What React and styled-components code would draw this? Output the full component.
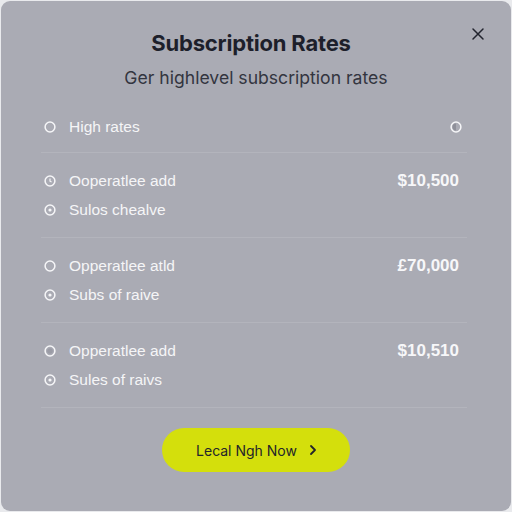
import React from 'react';
import styled, { createGlobalStyle } from 'styled-components';

const sections = [
  {
    rows: [{ label: 'High rates', icon: 'ring' }],
    aside: 'dot',
  },
  {
    rows: [
      { label: 'Ooperatlee add', icon: 'clock', price: '$10,500' },
      { label: 'Sulos chealve', icon: 'target' },
    ],
  },
  {
    rows: [
      { label: 'Opperatlee atld', icon: 'ring', price: '£70,000' },
      { label: 'Subs of raive', icon: 'target' },
    ],
  },
  {
    rows: [
      { label: 'Opperatlee add', icon: 'filled', price: '$10,510' },
      { label: 'Sules of raivs', icon: 'target' },
    ],
  },
];

const GlobalStyle = createGlobalStyle`
  html, body {
    margin: 0;
    padding: 0;
    background: #e9eaed;
  }
  body {
    font-family: Inter, "Liberation Sans", sans-serif;
  }
`;

const RowIcon = ({ kind }) => (
  <svg width="12" height="12" viewBox="0 0 12 12">
    <circle cx="6" cy="6" r="4.9" fill="none" stroke="#f6f6f8" strokeWidth="1.5" />
    {kind === 'target' && <circle cx="6" cy="6" r="1.6" fill="#f6f6f8" />}
    {kind === 'clock' && <path d="M6 3.4 V6.2 L7.6 7" fill="none" stroke="#f6f6f8" strokeWidth="1.2" />}
    {kind === 'filled' && <circle cx="6" cy="6" r="2.8" fill="#9a9ba5" />}
  </svg>
);

const AsideIcon = () => (
  <svg width="12" height="12" viewBox="0 0 12 12">
    <circle cx="6" cy="6" r="4.9" fill="none" stroke="#f6f6f8" strokeWidth="1.5" />
    <path d="M6 2.6 A3.4 3.4 0 0 0 6 9.4 Z" fill="#8f909a" />
  </svg>
);

export default function App() {
  return (
    <>
      <GlobalStyle />
      <Page>
        <Card>
          <Close aria-label="close">
            <svg width="14" height="14" viewBox="0 0 14 14">
              <path d="M2 2 L12 12 M12 2 L2 12" stroke="#22242e" strokeWidth="1.5" strokeLinecap="round" />
            </svg>
          </Close>
          <Title>Subscription Rates</Title>
          <Subtitle>Ger highlevel subscription rates</Subtitle>
          <List>
            {sections.map((section, i) => (
              <Section key={i} first={i === 0}>
                {section.rows.map((row, j) => (
                  <Row key={j}>
                    <RowIcon kind={row.icon} />
                    <Label>{row.label}</Label>
                    {row.price && <Price>{row.price}</Price>}
                    {j === 0 && section.aside === 'dot' && (
                      <AsideSlot>
                        <AsideIcon />
                      </AsideSlot>
                    )}
                  </Row>
                ))}
              </Section>
            ))}
          </List>
          <Footer>
            <CtaButton>
              Lecal Ngh Now
              <svg width="10" height="12" viewBox="0 0 10 12">
                <path d="M3 2 L7 6 L3 10" fill="none" stroke="#22242a" strokeWidth="1.8" strokeLinecap="round" strokeLinejoin="round" />
              </svg>
            </CtaButton>
          </Footer>
        </Card>
      </Page>
    </>
  );
}

const Page = styled.div`
  width: 512px;
  height: 512px;
  padding: 1px;
  box-sizing: border-box;
`;

const Card = styled.div`
  position: relative;
  height: 100%;
  box-sizing: border-box;
  background: #aaabb4;
  border-radius: 9px;
  padding: 28px 0 0;
  display: flex;
  flex-direction: column;
`;

const Close = styled.button`
  position: absolute;
  top: 25px;
  right: 25px;
  width: 16px;
  height: 16px;
  padding: 0;
  border: none;
  background: none;
  display: flex;
  align-items: center;
  justify-content: center;
`;

const Title = styled.h1`
  margin: 0;
  padding-right: 10px;
  text-align: center;
  font-size: 22px;
  line-height: 28px;
  font-weight: 700;
  color: #1d1f2b;
  letter-spacing: -0.2px;
`;

const Subtitle = styled.p`
  margin: 9px 0 0;
  text-align: center;
  font-size: 17.6px;
  line-height: 24px;
  font-weight: 400;
  color: #33353f;
`;

const List = styled.div`
  margin: 22px 44px 0 40px;
`;

const Section = styled.div`
  padding: ${p => (p.first ? '0 0 11px' : '13px 0 13px')};
  border-bottom: 1px solid #b3b4bc;
`;

const Row = styled.div`
  height: 29px;
  display: flex;
  align-items: center;
  padding: 0 8px 0 3px;
`;

const Label = styled.span`
  margin-left: 13px;
  font-family: "Liberation Sans", Arial, sans-serif;
  font-size: 15.5px;
  color: #f5f5f7;
`;

const Price = styled.span`
  margin-left: auto;
  font-family: "Liberation Sans", Arial, sans-serif;
  font-size: 17px;
  font-weight: 700;
  color: #f7f7f9;
`;

const AsideSlot = styled.span`
  margin-left: auto;
  display: flex;
  margin-right: -3px;
`;

const Footer = styled.div`
  display: flex;
  justify-content: center;
  padding-top: 20px;
`;

const CtaButton = styled.button`
  width: 188px;
  height: 44px;
  border: none;
  border-radius: 22px;
  background: #d4df0c;
  color: #23252a;
  font-family: Inter, "Liberation Sans", sans-serif;
  font-size: 14px;
  display: flex;
  align-items: center;
  justify-content: center;
  gap: 11px;
  padding-left: 8px;
`;
